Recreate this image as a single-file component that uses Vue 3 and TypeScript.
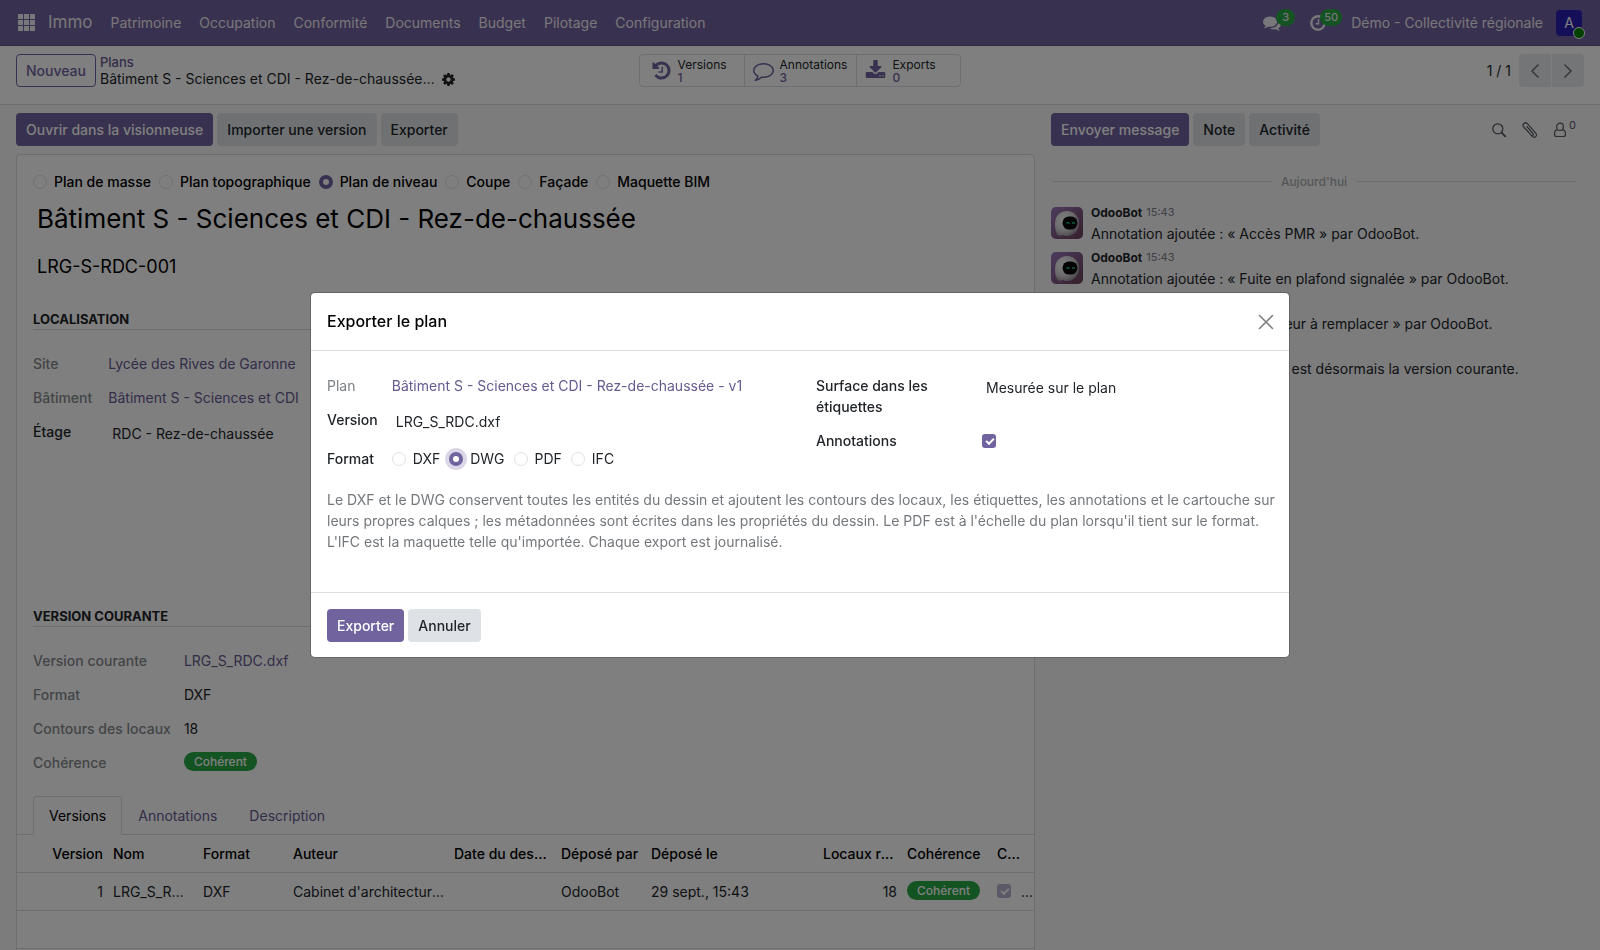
<script setup lang="ts">
import { ref } from 'vue'

interface Message {
  id: number
  text: string
}

const menus = ['Patrimoine', 'Occupation', 'Conformité', 'Documents', 'Budget', 'Pilotage', 'Configuration']
const planTypes = ['Plan de masse', 'Plan topographique', 'Plan de niveau', 'Coupe', 'Façade', 'Maquette BIM']
const formats = ['DXF', 'DWG', 'PDF', 'IFC']
const tabs = ['Versions', 'Annotations', 'Description']
const messages: Message[] = [
  { id: 1, text: 'Annotation ajoutée : « Accès PMR » par OdooBot.' },
  { id: 2, text: 'Annotation ajoutée : « Fuite en plafond signalée » par OdooBot.' },
  { id: 3, text: 'Annotation ajoutée : « Extincteur à remplacer » par OdooBot.' },
  { id: 4, text: 'La version 1 (LRG_S_RDC.dxf) est désormais la version courante.' },
]

const planType = ref('Plan de niveau')
const planName = ref('Bâtiment S - Sciences et CDI - Rez-de-chaussée')
const planCode = ref('LRG-S-RDC-001')
const floor = ref('RDC - Rez-de-chaussée')
const version = ref('LRG_S_RDC.dxf')
const format = ref('DWG')
const surface = ref('Mesurée sur le plan')
const withAnnotations = ref(true)
const activeTab = ref('Versions')
</script>

<template>
  <div class="app">
    <header class="navbar">
      <button class="apps" type="button" aria-label="Applications">
        <svg width="17" height="17" viewBox="0 0 17 17" fill="currentColor">
          <path d="M0 0h5v5H0zM6 0h5v5H6zM12 0h5v5h-5zM0 6h5v5H0zM6 6h5v5H6zM12 6h5v5h-5zM0 12h5v5H0zM6 12h5v5H6zM12 12h5v5h-5z" />
        </svg>
      </button>
      <a class="brand" href="#">Immo</a>
      <nav class="menus">
        <a v-for="m in menus" :key="m" href="#">{{ m }}</a>
      </nav>
      <div class="systray">
        <button class="tray" type="button" aria-label="Discussions">
          <svg width="18" height="18" viewBox="0 0 1792 1792" fill="currentColor"><path d="M1408 768q0 139-94 257t-256.500 186.500-353.500 68.500q-86 0-176-16-124 88-278 128-36 9-86 16h-3q-11 0-20.500-8t-11.500-21q-1-3-1-6.500t.5-6.500 2-6l2.500-5 3.500-5.500 4-5 4.500-5 4-4.500q5-6 23-25t26-29.500 22.500-29 25-38.500 20.500-44q-124-72-195-177t-71-224q0-139 94-257t256.500-186.500 353.500-68.500 353.500 68.500 256.500 186.500 94 257zm384 256q0 120-71 224.500t-195 176.500q10 24 20.500 44t25 38.500 22.500 29 26 29.500 23 25q1 1 4 4.500t4.500 5 4 5 3.500 5.500l2.500 5 2 6 .5 6.500-1 6.500q-3 14-13 22t-22 7q-50-7-86-16-154-40-278-128-90 16-176 16-271 0-472-132 58 4 88 4 161 0 309-45t264-129q125-92 192-212t67-254q0-77-23-152 129 71 204 178t75 230z" /></svg>
          <span class="count">3</span>
        </button>
        <button class="tray clock" type="button" aria-label="Activités">
          <svg width="18" height="18" viewBox="0 0 18 18" fill="none" stroke="currentColor"><circle cx="9" cy="9" r="6.700" stroke-width="2.400" /><path d="M9.500 5v4.700H6.500" stroke-width="1.500" /></svg>
          <span class="count">50</span>
        </button>
        <a class="company" href="#">Démo - Collectivité régionale</a>
        <button class="user" type="button" aria-label="Utilisateur">A<span class="status"></span></button>
      </div>
    </header>

    <section class="control">
      <div class="control-left">
        <button class="btn outline" type="button">Nouveau</button>
        <div class="crumbs">
          <a class="crumb" href="#">Plans</a>
          <div class="current">
            <span class="current-name">Bâtiment S - Sciences et CDI - Rez-de-chaussée - v1</span>
            <button class="gear" type="button" aria-label="Actions">
              <svg width="15" height="15" viewBox="0 0 1792 1792" fill="currentColor"><path d="M1152 896q0-106-75-181t-181-75-181 75-75 181 75 181 181 75 181-75 75-181zm512-109v222q0 12-8 23t-20 13l-185 28q-19 54-39 91 35 50 107 138 10 12 10 25t-9 23q-27 37-99 108t-94 71q-12 0-26-9l-138-108q-44 23-91 38-16 136-29 186-7 28-36 28h-222q-14 0-24.500-8.500t-11.500-21.500l-28-184q-49-16-90-37l-141 107q-10 9-25 9-14 0-25-11-126-114-165-168-7-10-7-23 0-12 8-23 15-21 51-66.500t54-70.500q-27-50-41-99l-183-27q-13-2-21-12.500t-8-23.500v-222q0-12 8-23t19-13l186-28q14-46 39-92-40-57-107-138-10-12-10-24 0-10 9-23 26-36 98.500-107.500t94.500-71.500q13 0 26 10l138 107q44-23 91-38 16-136 29-186 7-28 36-28h222q14 0 24.500 8.500t11.500 21.500l28 184q49 16 90 37l142-107q9-9 24-9 13 0 25 10 129 119 165 170 7 8 7 22 0 12-8 23-15 21-51 66.500t-54 70.500q26 50 41 98l183 28q13 2 21 12.500t8 23.500z" /></svg>
            </button>
          </div>
        </div>
      </div>
      <div class="stats">
        <button class="stat" type="button">
          <svg width="21" height="21" viewBox="0 0 1792 1792" fill="currentColor"><path d="M1664 896q0 156-61 298t-164 245-245 164-298 61q-172 0-327-72.500t-264-204.500q-7-10-6.500-22.500t8.500-20.500l137-138q10-9 25-9 16 2 23 12 73 95 179 147t225 52q104 0 198.500-40.500t163.500-109.500 109.500-163.500 40.500-198.500-40.500-198.500-109.500-163.500-163.500-109.500-198.500-40.500q-98 0-188 35.500t-160 101.500l137 138q31 30 14 69-17 40-59 40h-448q-26 0-45-19t-19-45v-448q0-42 40-59 39-17 69 14l130 129q107-101 244.500-156.500t284.500-55.500q156 0 298 61t245 164 164 245 61 298zm-640-288v448q0 14-9 23t-23 9h-320q-14 0-23-9t-9-23v-64q0-14 9-23t23-9h224v-352q0-14 9-23t23-9h64q14 0 23 9t9 23z" /></svg>
          <span class="stat-text">Versions<b>1</b></span>
        </button>
        <button class="stat" type="button">
          <svg width="21" height="21" viewBox="0 0 1792 1792" fill="currentColor"><path d="M896 384q-204 0-381.500 69.500t-282 187.500-104.500 255q0 112 71.500 213.500t201.500 175.500l87 50-27 96q-24 91-70 172 152-63 275-171l43-38 57 6q69 8 130 8 204 0 381.500-69.500t282-187.500 104.500-255-104.500-255-282-187.500-381.500-69.500zm896 512q0 174-120 321.500t-326 233-450 85.500q-70 0-145-8-198 175-460 242-49 14-114 22h-5q-15 0-27-10.500t-16-27.500v-1q-3-4-.5-12t2-10 4.500-9.500l6-9 7-8.500 8-9q7-8 31-34.500t34.500-38 31-39.500 32.500-51 27-59 26-76q-157-89-247.500-220t-90.500-281q0-174 120-321.500t326-233 450-85.500 450 85.500 326 233 120 321.500z" /></svg>
          <span class="stat-text">Annotations<b>3</b></span>
        </button>
        <button class="stat" type="button">
          <svg width="21" height="21" viewBox="0 0 1792 1792" fill="currentColor"><path d="M1344 1344q0-26-19-45t-45-19-45 19-19 45 19 45 45 19 45-19 19-45zm256 0q0-26-19-45t-45-19-45 19-19 45 19 45 45 19 45-19 19-45zm128-224v320q0 40-28 68t-68 28h-1472q-40 0-68-28t-28-68v-320q0-40 28-68t68-28h465l135 136q58 56 136 56t136-56l136-136h464q40 0 68 28t28 68zm-325-569q17 41-14 70l-448 448q-18 19-45 19t-45-19l-448-448q-31-29-14-70 17-39 59-39h256v-448q0-26 19-45t45-19h256q26 0 45 19t19 45v448h256q42 0 59 39z" /></svg>
          <span class="stat-text">Exports<b>0</b></span>
        </button>
      </div>
      <div class="pager">
        <span>1 / 1</span>
        <div class="pager-buttons">
          <button type="button" aria-label="Précédent"><svg width="16" height="16" viewBox="0 0 16 16" fill="none" stroke="currentColor" stroke-width="1.500"><path d="M11.500 1.500 5 8l6.500 6.500" /></svg></button>
          <button type="button" aria-label="Suivant"><svg width="16" height="16" viewBox="0 0 16 16" fill="none" stroke="currentColor" stroke-width="1.500"><path d="M4.500 1.500 11 8l-6.500 6.500" /></svg></button>
        </div>
      </div>
    </section>

    <main class="content">
      <section class="form">
        <div class="actions">
          <button class="btn primary" type="button">Ouvrir dans la visionneuse</button>
          <button class="btn secondary" type="button">Importer une version</button>
          <button class="btn secondary" type="button">Exporter</button>
        </div>
        <div class="sheet">
          <div class="radios types">
            <label v-for="t in planTypes" :key="t" class="radio">
              <input v-model="planType" type="radio" name="plan-type" :value="t" />{{ t }}
            </label>
          </div>
          <input v-model="planName" class="title" type="text" aria-label="Nom du plan" />
          <input v-model="planCode" class="code" type="text" aria-label="Code du plan" />

          <div class="group location">
            <h2>Localisation</h2>
            <dl>
              <dt>Site</dt>
              <dd><a href="#">Lycée des Rives de Garonne</a></dd>
              <dt>Bâtiment</dt>
              <dd><a href="#">Bâtiment S - Sciences et CDI</a></dd>
              <dt class="editable"><label for="floor">Étage</label></dt>
              <dd><input id="floor" v-model="floor" class="field" type="text" /></dd>
            </dl>
          </div>

          <div class="group version">
            <h2>Version courante</h2>
            <dl>
              <dt>Version courante</dt>
              <dd><a href="#">LRG_S_RDC.dxf</a></dd>
              <dt>Format</dt>
              <dd>DXF</dd>
              <dt>Contours des locaux</dt>
              <dd>18</dd>
              <dt>Cohérence</dt>
              <dd><span class="badge">Cohérent</span></dd>
            </dl>
          </div>

          <div class="tabs" role="tablist">
            <button
              v-for="t in tabs"
              :key="t"
              type="button"
              role="tab"
              :aria-selected="activeTab === t"
              :class="{ active: activeTab === t }"
              @click="activeTab = t"
            >{{ t }}</button>
          </div>
          <table class="list">
            <colgroup>
              <col class="c-version" /><col class="c-name" /><col class="c-name" /><col class="c-author" />
              <col class="c-date" /><col class="c-name" /><col /><col class="c-rooms" />
              <col class="c-name" /><col class="c-current" /><col class="c-more" />
            </colgroup>
            <thead>
              <tr>
                <th class="num">Version</th>
                <th>Nom</th>
                <th>Format</th>
                <th>Auteur</th>
                <th>Date du dessin</th>
                <th>Déposé par</th>
                <th>Déposé le</th>
                <th class="num">Locaux reconnus</th>
                <th>Cohérence</th>
                <th class="clip">C...</th>
                <th></th>
              </tr>
            </thead>
            <tbody>
              <tr>
                <td class="num">1</td>
                <td>LRG_S_RDC.dxf</td>
                <td>DXF</td>
                <td>Cabinet d'architecture Garonne</td>
                <td></td>
                <td>OdooBot</td>
                <td>29 sept., 15:43</td>
                <td class="num">18</td>
                <td><span class="badge">Cohérent</span></td>
                <td class="clip"><input class="check" type="checkbox" checked disabled aria-label="Courante" /></td>
                <td class="more">...</td>
              </tr>
              <tr>
                <td colspan="11"></td>
              </tr>
            </tbody>
          </table>
        </div>
      </section>

      <aside class="chatter">
        <div class="actions">
          <button class="btn primary" type="button">Envoyer message</button>
          <button class="btn secondary" type="button">Note</button>
          <button class="btn secondary" type="button">Activité</button>
          <div class="tools">
            <button type="button" aria-label="Rechercher">
              <svg width="16" height="16" viewBox="0 0 16 16" fill="none" stroke="currentColor" stroke-width="1.300"><circle cx="6.800" cy="6.800" r="5" /><path d="m10.500 10.500 4.300 4.300" stroke-width="1.800" /></svg>
            </button>
            <button type="button" aria-label="Pièces jointes">
              <svg width="16" height="16" viewBox="0 0 16 16" fill="none" stroke="currentColor" stroke-width="1.200"><path d="M4.500 4.200l6.500 7.300c1.200 1.500-.6 3-1.800 1.700L1.700 5C-.3 2.400 3-.7 5.400 1.700l8.300 9.400c2.200 2.700-1.200 5.800-3.500 3.300L4.800 8.200" /></svg>
            </button>
            <button class="followers" type="button" aria-label="Abonnés">
              <svg width="14" height="16" viewBox="0 0 14 16" fill="none" stroke="currentColor" stroke-width="1.200"><rect x="3.700" y="1.200" width="6.600" height="7.300" rx="3.200" /><path d="M4.500 7.600C2.300 8 1.500 9.500 1.500 12c0 1.600.8 2.500 2.200 2.500h6.600c1.400 0 2.200-.9 2.200-2.500 0-2.500-.8-4-3-4.400" /></svg>
              <span class="follower-count">0</span>
            </button>
          </div>
        </div>
        <div class="day"><span>Aujourd'hui</span></div>
        <article v-for="m in messages" :key="m.id" class="message">
          <svg class="avatar" width="32" height="32" viewBox="0 0 32 32">
            <defs>
              <linearGradient id="bot-bg" x1="0" y1="0" x2="1" y2="1"><stop offset="0" stop-color="#9a78bd" /><stop offset="1" stop-color="#6b3f54" /></linearGradient>
              <radialGradient id="bot-head" cx=".35" cy=".35" r=".75"><stop offset="0" stop-color="#fff" /><stop offset=".6" stop-color="#d5d2d8" /><stop offset="1" stop-color="#8f8791" /></radialGradient>
            </defs>
            <rect width="32" height="32" rx="5" fill="url(#bot-bg)" />
            <path d="M4 17C4 9 9 4 16 4s12 5 12 12-5 13-12 13c-2 0-3-.5-4-1l-4 1C5 27 4 22 4 17z" fill="url(#bot-head)" />
            <rect x="11.500" y="9.500" width="15" height="13" rx="6.400" fill="#08090b" />
            <path d="M15.500 16.700q1.500-2 3 0M21 16.700q1.500-2 3 0" fill="none" stroke="#1bbf83" stroke-width="1.200" />
          </svg>
          <div class="message-body">
            <div class="message-head"><strong>OdooBot</strong><time>15:43</time></div>
            <p>{{ m.text }}</p>
          </div>
        </article>
      </aside>
    </main>

    <div class="backdrop">
      <div class="modal" role="dialog" aria-modal="true" aria-labelledby="dialog-title">
        <header class="modal-head">
          <h1 id="dialog-title">Exporter le plan</h1>
          <button class="close" type="button" aria-label="Fermer">
            <svg width="16" height="16" viewBox="0 0 16 16" fill="none" stroke="currentColor" stroke-width="1.600" stroke-linecap="round"><path d="m1.500 1.500 13 13m0-13-13 13" /></svg>
          </button>
        </header>
        <div class="modal-body">
          <div class="columns">
            <div class="grid left">
              <span class="name muted">Plan</span>
              <div class="value"><a href="#">Bâtiment S - Sciences et CDI - Rez-de-chaussée - v1</a></div>
              <label class="name" for="version">Version</label>
              <div class="value"><input id="version" v-model="version" class="field" type="text" /></div>
              <span id="format-label" class="name lower">Format</span>
              <div class="value radios lower" role="radiogroup" aria-labelledby="format-label">
                <label v-for="f in formats" :key="f" class="radio">
                  <input v-model="format" type="radio" name="format" :value="f" :class="{ focused: format === f }" />{{ f }}
                </label>
              </div>
            </div>
            <div class="grid right">
              <label class="name" for="surface">Surface dans les étiquettes</label>
              <div class="value">
                <select id="surface" v-model="surface" class="field">
                  <option>Mesurée sur le plan</option>
                </select>
              </div>
              <label class="name" for="annotations">Annotations</label>
              <div class="value"><input id="annotations" v-model="withAnnotations" class="check" type="checkbox" /></div>
            </div>
          </div>
          <p class="help">
            Le DXF et le DWG conservent toutes les entités du dessin et ajoutent les contours des locaux, les étiquettes, les
            annotations et le cartouche sur leurs propres calques ; les métadonnées sont écrites dans les propriétés du dessin. Le
            PDF est à l'échelle du plan lorsqu'il tient sur le format. L'IFC est la maquette telle qu'importée. Chaque export est
            journalisé.
          </p>
        </div>
        <footer class="modal-foot">
          <button class="btn primary" type="button">Exporter</button>
          <button class="btn secondary" type="button">Annuler</button>
        </footer>
      </div>
    </div>
  </div>
</template>

<style>
body {
  margin: 0;
}
</style>

<style scoped>
.app,
.app * {
  box-sizing: border-box;
}
.app {
  --purple: #71639e;
  --link: #665a90;
  --line: #dadde1;
  --text: #212529;
  height: 100vh;
  overflow: hidden;
  display: flex;
  flex-direction: column;
  background: #fff;
  color: var(--text);
  font-family: Inter, "Liberation Sans", sans-serif;
  font-size: 14px;
  line-height: 21px;
}
button,
input,
select {
  font: inherit;
  color: inherit;
  margin: 0;
  padding: 0;
  border: 0;
  background: none;
}
button {
  cursor: pointer;
}
a {
  color: var(--link);
  text-decoration: none;
}
svg {
  display: block;
  flex: none;
}
h1,
h2,
p,
dl,
dd {
  margin: 0;
}

.navbar {
  flex: none;
  height: 46px;
  display: flex;
  align-items: center;
  padding: 0 18px;
  background: var(--purple);
  border-bottom: 1px solid #5a4f80;
  color: #f0eef5;
}
.navbar a {
  color: #f0eef5;
}
.brand {
  margin: 0 18px 0 13px;
  font-size: 17px;
}
.menus {
  display: flex;
  gap: 18px;
}
.systray {
  display: flex;
  align-items: center;
  margin-left: auto;
}
.tray {
  position: relative;
  margin-right: 28px;
}
.tray.clock {
  margin-right: 24px;
}
.count {
  position: absolute;
  left: 13px;
  top: -5px;
  height: 17px;
  padding: 0 6px;
  border-radius: 9px;
  background: #28a745;
  font-size: 11px;
  font-weight: 500;
  line-height: 17px;
}
.clock .count {
  left: 11px;
  padding: 0 4px;
}
.user {
  position: relative;
  width: 26px;
  height: 26px;
  margin-left: 13px;
  border-radius: 4px;
  background: #2a1fb4;
  color: #fff;
}
.status {
  position: absolute;
  right: -3px;
  bottom: -3px;
  width: 12px;
  height: 12px;
  border: 1px solid #fff;
  border-radius: 50%;
  background: #008000;
}

.control {
  flex: none;
  display: grid;
  grid-template-columns: 1fr auto 1fr;
  padding: 8px 16px 17px;
  border-bottom: 1px solid var(--line);
}
.control-left {
  display: flex;
  gap: 4px;
  min-width: 0;
}
.btn {
  height: 33px;
  padding: 0 10px;
  border-radius: 4px;
  font-weight: 500;
  white-space: nowrap;
}
.outline {
  border: 1px solid var(--purple);
  padding: 0 9px;
  color: var(--purple);
}
.primary {
  background: var(--purple);
  color: #fff;
}
.secondary {
  background: #dee2e6;
}
.crumbs {
  display: flex;
  flex-direction: column;
  line-height: 16px;
  min-width: 0;
}
.crumb {
  font-size: 13px;
  font-weight: 500;
  line-height: 17px;
}
.current {
  display: flex;
  gap: 3px;
  align-items: center;
}
.current-name {
  width: 338px;
  overflow: hidden;
  text-overflow: ellipsis;
  white-space: nowrap;
}
.stats {
  display: flex;
  height: 33px;
  border: 1px solid var(--line);
  border-radius: 4px;
}
.stat {
  display: flex;
  align-items: center;
  gap: 6px;
  min-width: 104px;
  padding: 0 9px 0 8px;
  text-align: left;
  font-size: 12px;
  line-height: 13px;
}
.stat:nth-child(1) {
  padding-left: 11px;
}
.stat + .stat {
  border-left: 1px solid var(--line);
}
.stat svg {
  color: var(--purple);
}
.stat b {
  display: block;
  font-weight: 500;
  color: var(--purple);
}
.pager {
  display: flex;
  justify-content: flex-end;
  align-items: center;
  gap: 8px;
  height: 33px;
}
.pager-buttons {
  display: flex;
  gap: 1px;
}
.pager-buttons button {
  display: grid;
  place-items: center;
  width: 32px;
  height: 33px;
  background: #e9ebef;
  color: #6c757d;
}
.pager-buttons button:first-child {
  border-radius: 4px 0 0 4px;
}
.pager-buttons button:last-child {
  border-radius: 0 4px 4px 0;
}

.content {
  flex: 1;
  min-height: 0;
  display: flex;
  gap: 16px;
  padding: 8px 16px 0;
  background: #f9f9fa;
  overflow: hidden;
}
.form {
  flex: 1019 1 0;
  min-width: 0;
}
.actions {
  display: flex;
  gap: 4px;
}
.sheet {
  min-height: 100%;
  margin-top: 8px;
  padding: 16px;
  border: 1px solid var(--line);
  border-radius: 4px;
  background: #fff;
  overflow: hidden;
}
.radios {
  display: flex;
  gap: 9px;
}
.types {
  gap: 8px;
  font-weight: 500;
  color: #000;
}
.radio {
  display: flex;
  align-items: center;
  gap: 7px;
}
.radio input {
  appearance: none;
  width: 14px;
  height: 14px;
  border: 1px solid #dee2e6;
  border-radius: 50%;
  background: #fff;
}
.radio input:checked {
  border: 4px solid var(--purple);
}
.radio input.focused {
  box-shadow: 0 0 0 4px #dbd7e8;
}
.title,
.code {
  display: block;
  width: 100%;
  padding: 0 4px;
  color: #000;
}
.title {
  height: 34px;
  margin-top: 9px;
  font-size: 26px;
}
.code {
  height: 28px;
  margin-top: 17px;
  font-size: 18px;
}
.group {
  width: 50%;
}
h2 {
  height: 21px;
  border-bottom: 1px solid var(--line);
  font-size: 13px;
  font-weight: 700;
  line-height: 21px;
  text-transform: uppercase;
}
.location {
  margin-top: 29px;
  min-height: 297px;
}
.group dl {
  display: grid;
  grid-template-columns: max-content 1fr;
  column-gap: 16px;
  row-gap: 13px;
  padding-top: 23px;
}
.group.version dl {
  column-gap: 13px;
}
.group dt {
  font-weight: 500;
  color: #868a8e;
}
.group dt.editable {
  color: var(--text);
}
.location dd {
  height: 21px;
}
.field {
  display: block;
  appearance: none;
  width: 100%;
  height: 25px;
  padding: 0 4px;
  line-height: 21px;
}
.badge {
  display: inline-block;
  height: 19px;
  padding: 0 10px;
  border-radius: 10px;
  background: #28a745;
  color: #fff;
  font-size: 12px;
  font-weight: 500;
  line-height: 19px;
  vertical-align: top;
}
.tabs {
  display: flex;
  margin: 23px -16px 0;
  padding-left: 16px;
  border-bottom: 1px solid var(--line);
}
.tabs button {
  height: 39px;
  margin-bottom: -1px;
  padding: 0 15px;
  border: 1px solid transparent;
  border-radius: 4px 4px 0 0;
  color: var(--link);
}
.tabs .active {
  border-color: var(--line) var(--line) #fff;
  background: #fff;
  color: #000;
}
.list {
  width: calc(100% + 32px);
  margin: 0 -16px;
  table-layout: fixed;
  border-collapse: collapse;
}
.c-version {
  width: 91px;
}
.c-name {
  width: 90px;
}
.c-author {
  width: 161px;
}
.c-date {
  width: 107px;
}
.c-rooms {
  width: 84px;
}
.c-current {
  width: 29px;
}
.c-more {
  width: 13px;
}
.list th,
.list td {
  height: 38px;
  padding: 0 5px;
  border-bottom: 1px solid var(--line);
  text-align: left;
  overflow: hidden;
  text-overflow: ellipsis;
  white-space: nowrap;
}
.list th {
  height: 37px;
  font-weight: 500;
  color: #000;
}
.list .num {
  text-align: right;
}
.list .clip,
.list .more {
  text-overflow: clip;
}
.list .more {
  padding: 0;
}
.check {
  appearance: none;
  display: block;
  width: 14px;
  height: 14px;
  border-radius: 3px;
  background: var(--purple);
}
.check::before {
  content: "";
  display: block;
  width: 6px;
  height: 3px;
  margin: 4px;
  border: solid #fff;
  border-width: 0 0 2px 2px;
  rotate: -45deg;
}
.check:not(:checked) {
  background: #fff;
  border: 1px solid var(--line);
}
.check:disabled {
  opacity: 0.5;
}

.chatter {
  flex: 533 1 0;
  min-width: 0;
}
.tools {
  display: flex;
  align-items: center;
  gap: 15px;
  margin-left: auto;
  padding-right: 8px;
  color: #555a60;
}
.followers {
  display: flex;
  gap: 2px;
}
.follower-count {
  font-size: 11px;
  line-height: 6px;
}
.day {
  display: flex;
  align-items: center;
  gap: 9px;
  margin: 25px 8px 10px 1px;
  color: #a9adb1;
  font-size: 12px;
  font-weight: 500;
}
.day::before,
.day::after {
  content: "";
  flex: 1;
  border-top: 1px solid var(--line);
}
.message {
  display: flex;
  gap: 8px;
  height: 45px;
}
.avatar {
  margin-top: 5px;
}
.message-head {
  display: flex;
  gap: 4px;
  font-size: 12px;
}
.message-head strong {
  font-weight: 700;
}
.message-head time {
  color: #7c8186;
  font-size: 11px;
}

.backdrop {
  position: fixed;
  inset: 0;
  display: flex;
  align-items: center;
  justify-content: center;
  background: rgb(0 0 0 / 50%);
}
.modal {
  width: 980px;
  max-width: calc(100% - 32px);
  border: 1px solid rgb(0 0 0 / 20%);
  border-radius: 5px;
  background: #fff;
  background-clip: padding-box;
}
.modal-head {
  display: flex;
  align-items: center;
  justify-content: space-between;
  height: 58px;
  padding: 0 15px 0 16px;
  border-bottom: 1px solid var(--line);
}
.modal-head h1 {
  color: #000;
  font-size: 16px;
  font-weight: 500;
}
.close {
  color: #808080;
}
.modal-body {
  padding: 24px 12px 40px 16px;
}
.columns {
  display: grid;
  grid-template-columns: 1fr 1fr;
  gap: 32px;
  padding-right: 4px;
}
.grid {
  display: grid;
  align-content: start;
  row-gap: 13px;
}
.left {
  grid-template-columns: max-content 1fr;
  column-gap: 14px;
}
.right {
  grid-template-columns: 150px 1fr;
  column-gap: 16px;
}
.name {
  font-weight: 500;
}
.muted {
  font-weight: 400;
  color: #7c8084;
}
.value {
  height: 21px;
}
.lower {
  margin-top: 5px;
}
.value .check {
  margin-top: 4px;
}
.help {
  margin-top: 20px;
  color: #74787c;
}
.modal-foot {
  display: flex;
  gap: 4px;
  height: 65px;
  padding: 16px;
  border-top: 1px solid var(--line);
}
</style>
